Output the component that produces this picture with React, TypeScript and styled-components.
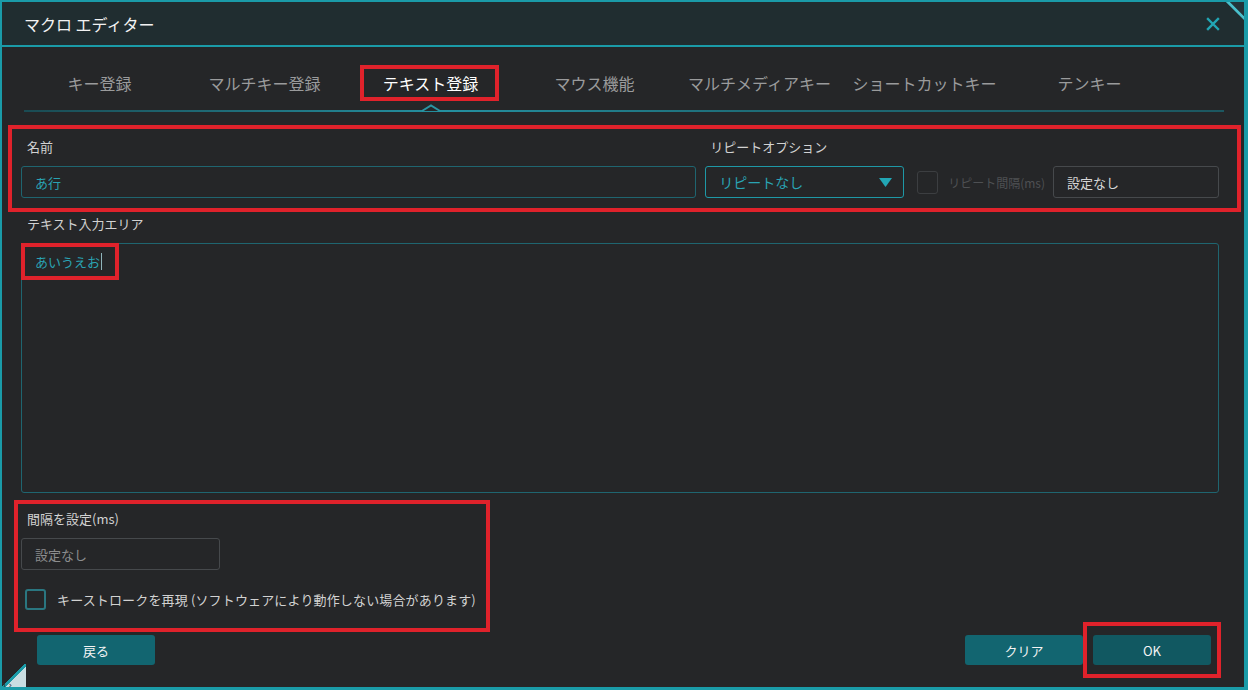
import React from "react";
import styled, { createGlobalStyle } from "styled-components";

const GlobalStyle = createGlobalStyle`
  html, body {
    margin: 0;
    padding: 0;
    background: #252628;
  }
  body {
    font-family: "Noto Sans CJK JP", "Noto Sans", "Liberation Sans", sans-serif;
  }
  * { box-sizing: border-box; }
`;

const RED = "#e0222b";
const TEAL = "#1a9ba8";

const S = {
  Window: styled.div`
    position: relative;
    width: 1248px;
    height: 690px;
    border: 2px solid ${TEAL};
    border-right-width: 4px;
    border-bottom-width: 3px;
    background: #252628;
    display: flex;
    flex-direction: column;
    overflow: hidden;
  `,
  TitleBar: styled.div`
    height: 45px;
    flex-shrink: 0;
    background: #202d30;
    border-bottom: 2px solid ${TEAL};
    display: flex;
    align-items: center;
    justify-content: space-between;
    padding: 0 22px 0 22px;
    color: #f2f2f2;
    font-size: 16px;
  `,
  Close: styled.button`
    border: 0;
    background: none;
    padding: 0;
    margin-right: 2px;
    display: flex;
    cursor: pointer;
  `,
  Body: styled.div`
    flex: 1;
    display: flex;
    flex-direction: column;
    padding: 18px 25px 0 19px;
  `,
  TabRow: styled.div`
    display: flex;
    margin-left: -4px;
  `,
  Tab: styled.div<{ $active?: boolean }>`
    width: 165px;
    height: 36px;
    display: flex;
    align-items: center;
    justify-content: center;
    font-size: 16px;
    color: ${({ $active }) => ($active ? "#ffffff" : "#9a9b9c")};
  `,
  TabMark: styled.span`
    height: 36px;
    border: 4px solid ${RED};
    padding: 0 17px 0 19px;
    display: flex;
    align-items: center;
  `,
  Underline: styled.div`
    position: relative;
    height: 2px;
    margin: 9px -5px 0 3px;
    background: linear-gradient(90deg, #1a4b53 0%, #2490a0 35%, #1e6d78 60%, #1c5760 100%);
    svg {
      position: absolute;
      left: 397px;
      top: -6px;
    }
  `,
  TopSection: styled.div`
    margin: 13px -22px 0 -13px;
    border: 4px solid ${RED};
    padding: 9px 18px 10px 9px;
    display: flex;
    justify-content: space-between;
  `,
  Field: styled.div<{ $width?: number }>`
    display: flex;
    flex-direction: column;
    gap: 10px;
    width: ${({ $width }) => ($width ? `${$width}px` : "auto")};
  `,
  Label: styled.div<{ $top?: number; $indent?: number }>`
    font-size: 13px;
    line-height: 18px;
    height: 18px;
    color: #d2d2d2;
    padding-left: ${({ $indent }) => $indent ?? 6}px;
    margin-top: ${({ $top }) => $top ?? 0}px;
    white-space: nowrap;
  `,
  Input: styled.div<{ $tone: "teal" | "gray"; $width?: number; $muted?: boolean }>`
    height: 32px;
    width: ${({ $width }) => ($width ? `${$width}px` : "100%")};
    border: 1px solid ${({ $tone }) => ($tone === "teal" ? "#1f6570" : "#46494c")};
    border-radius: 3px;
    display: flex;
    align-items: center;
    padding: 0 13px;
    font-size: 13px;
    color: ${({ $tone, $muted }) => ($tone === "teal" ? "#2aa3b3" : $muted ? "#8c8d8e" : "#d6d6d6")};
  `,
  Controls: styled.div`
    display: flex;
    align-items: center;
  `,
  Select: styled.div`
    width: 199px;
    height: 32px;
    border: 1px solid #1e98a6;
    border-radius: 3px;
    display: flex;
    align-items: center;
    justify-content: space-between;
    padding: 0 11px 0 13px;
    font-size: 14px;
    color: #2aa3b3;
    margin-right: 13px;
  `,
  Check: styled.span<{ $on?: boolean; $h?: number }>`
    width: 21px;
    height: ${({ $h }) => $h ?? 21}px;
    flex-shrink: 0;
    border: ${({ $on }) => ($on ? "2px solid #2a7680" : "1.5px solid #3c3e41")};
    border-radius: 3px;
  `,
  DisabledText: styled.span`
    font-size: 12px;
    color: #4e5053;
    margin: 0 8px 0 10px;
    white-space: nowrap;
  `,
  TextArea: styled.div`
    margin-top: 10px;
    height: 250px;
    border: 1px solid #1f6570;
    border-radius: 3px;
    display: flex;
    align-items: flex-start;
  `,
  TextMark: styled.span`
    margin: -1px 0 0 -1px;
    height: 37px;
    border: 4px solid ${RED};
    padding: 0 13px 0 10px;
    display: flex;
    align-items: center;
    font-size: 13px;
    color: #2aa3b3;
  `,
  Caret: styled.span`
    width: 1px;
    height: 17px;
    background: #8fb4ba;
    margin-left: 1px;
  `,
  BottomSection: styled.div`
    margin: 7px 0 0 -7px;
    width: 476px;
    border: 4px solid ${RED};
    padding: 6px 0 18px 3px;
    display: flex;
    flex-direction: column;
    gap: 10px;
  `,
  CheckRow: styled.div`
    display: flex;
    align-items: center;
    margin: 9px 0 0 4px;
    gap: 11px;
    font-size: 13px;
    color: #d2d2d2;
    letter-spacing: 0.15px;
  `,
  ButtonRow: styled.div`
    margin-top: 3px;
    display: flex;
    justify-content: space-between;
    align-items: center;
    padding: 0 8px 0 16px;
  `,
  ButtonGroup: styled.div`
    display: flex;
    align-items: center;
    gap: 10px;
  `,
  Button: styled.button<{ $dark?: boolean }>`
    width: 118px;
    height: 30px;
    border: 0;
    border-radius: 3px;
    background: ${({ $dark }) => ($dark ? "#115861" : "#126570")};
    color: #f4f4f4;
    font-family: inherit;
    font-size: 13px;
    padding: 0;
  `,
  ButtonMark: styled.div`
    border: 4px solid ${RED};
    padding: 9px 6px;
    margin: -13px -10px;
    display: flex;
  `,
  CornerTR: styled.svg`
    position: absolute;
    right: -4px;
    top: -2px;
  `,
  CornerBL: styled.div`
    position: absolute;
    left: -2px;
    bottom: -3px;
    width: 26px;
    height: 26px;
    background: linear-gradient(135deg, transparent 47%, ${TEAL} 47%, ${TEAL} 54%, #c9dde2 54%);
    span {
      position: absolute;
      left: 0;
      bottom: 0;
      font-family: "DejaVu Sans", sans-serif;
      font-size: 9px;
      line-height: 9px;
      color: #333;
    }
  `,
};

const tabs = [
  "キー登録",
  "マルチキー登録",
  "テキスト登録",
  "マウス機能",
  "マルチメディアキー",
  "ショートカットキー",
  "テンキー",
];

export default function App() {
  const active = 2;
  return (
    <>
      <GlobalStyle />
      <S.Window>
        <S.TitleBar>
          <span>マクロ エディター</span>
          <S.Close aria-label="close">
            <svg width="14" height="14" viewBox="0 0 14 14">
              <path d="M2 2 L12 12 M12 2 L2 12" stroke="#22a6b4" strokeWidth="2.4" strokeLinecap="square" />
            </svg>
          </S.Close>
        </S.TitleBar>

        <S.Body>
          <S.TabRow>
            {tabs.map((t, i) => (
              <S.Tab key={t} $active={i === active}>
                {i === active ? <S.TabMark>{t}</S.TabMark> : t}
              </S.Tab>
            ))}
          </S.TabRow>
          <S.Underline>
            <svg width="20" height="8" viewBox="0 0 20 8">
              <path d="M1 7 L10 1.5 L19 7" fill="#252628" stroke="#2a95a3" strokeWidth="2" />
            </svg>
          </S.Underline>

          <S.TopSection>
            <S.Field $width={675}>
              <S.Label>名前</S.Label>
              <S.Input $tone="teal">あ行</S.Input>
            </S.Field>
            <S.Field>
              <S.Label $indent={5}>リピートオプション</S.Label>
              <S.Controls>
                <S.Select>
                  <span>リピートなし</span>
                  <svg width="13" height="9" viewBox="0 0 13 9">
                    <path d="M0 0 H13 L6.5 9 Z" fill="#22a6b4" />
                  </svg>
                </S.Select>
                <S.Check $h={23} />
                <S.DisabledText>リピート間隔(ms)</S.DisabledText>
                <S.Input $tone="gray" $width={166}>設定なし</S.Input>
              </S.Controls>
            </S.Field>
          </S.TopSection>

          <S.Label $top={3}>テキスト入力エリア</S.Label>
          <S.TextArea>
            <S.TextMark>
              あいうえお
              <S.Caret />
            </S.TextMark>
          </S.TextArea>

          <S.BottomSection>
            <S.Label>間隔を設定(ms)</S.Label>
            <S.Input $tone="gray" $width={199} $muted>設定なし</S.Input>
            <S.CheckRow>
              <S.Check $on />
              <span>キーストロークを再現 (ソフトウェアにより動作しない場合があります)</span>
            </S.CheckRow>
          </S.BottomSection>

          <S.ButtonRow>
            <S.Button>戻る</S.Button>
            <S.ButtonGroup>
              <S.Button>クリア</S.Button>
              <S.ButtonMark>
                <S.Button $dark>OK</S.Button>
              </S.ButtonMark>
            </S.ButtonGroup>
          </S.ButtonRow>
        </S.Body>

        <S.CornerTR width="24" height="24" viewBox="0 0 24 24">
          <path d="M2 0 L24 22" stroke="#49bfcb" strokeWidth="3" />
          <path d="M4 0 L24 0 L24 20 Z" fill="#23343a" />
        </S.CornerTR>
        <S.CornerBL>
          <span>p ›</span>
        </S.CornerBL>
      </S.Window>
    </>
  );
}
